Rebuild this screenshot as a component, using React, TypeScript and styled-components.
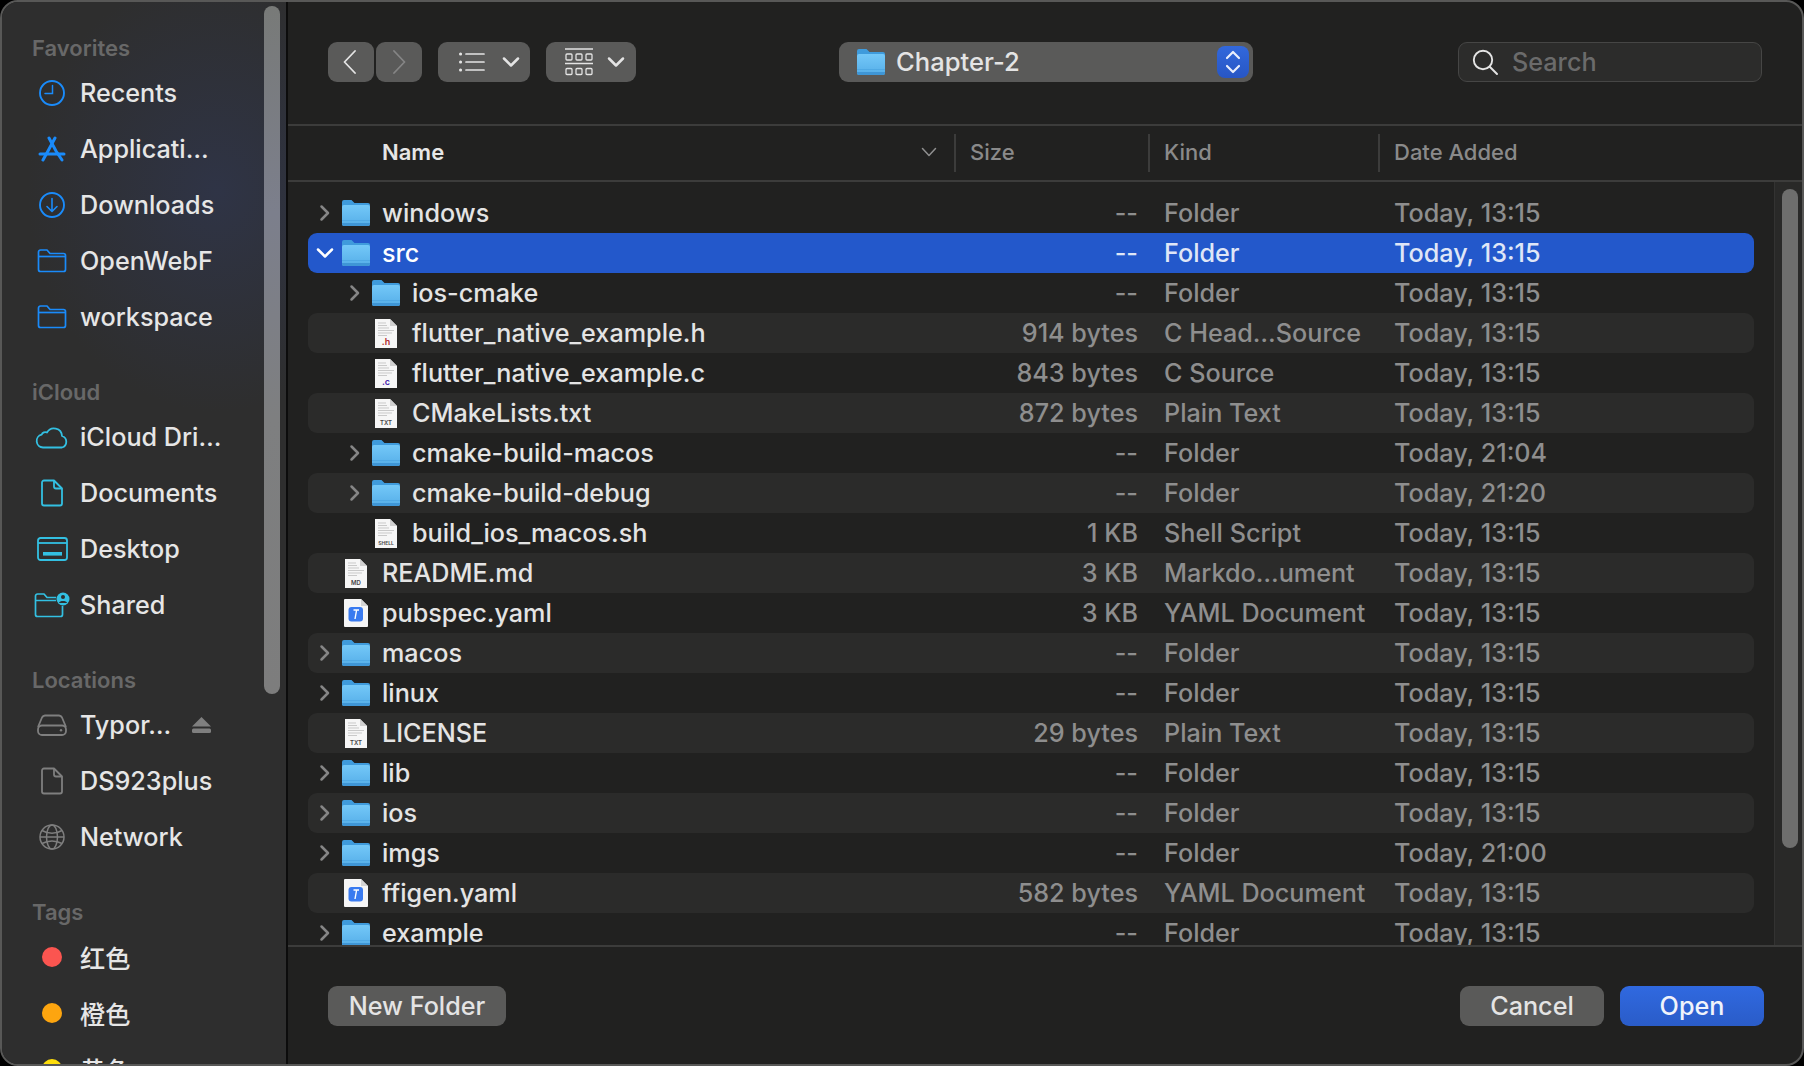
import styled, { createGlobalStyle } from "styled-components";
import type { ReactNode } from "react";

const GlobalStyle = createGlobalStyle`
  html, body {
    margin: 0;
    padding: 0;
    background: #000;
    font-family: Inter, "Noto Sans CJK SC", sans-serif;
  }
`;

const Window = styled.div`
  box-sizing: border-box;
  display: flex;
  width: 1804px;
  height: 1066px;
  overflow: hidden;
  background: #212120;
  border: 2px solid #585857;
  border-radius: 18px;
`;

const Sidebar = styled.aside`
  position: relative;
  flex: 0 0 286px;
  box-sizing: border-box;
  height: 100%;
  padding-top: 29px;
  overflow: hidden;
  background:
    radial-gradient(ellipse 190px 220px at 215px 190px, #2f3446 0%, rgba(47, 52, 70, 0) 100%),
    #2e2e2e;
  border-right: 2px solid #0c0c0c;
`;

const SidebarThumb = styled.div`
  position: absolute;
  top: 4px;
  left: 262px;
  width: 16px;
  height: 688px;
  border-radius: 8px;
  background: linear-gradient(180deg, #787a78 0%, #7c7f8c 30%, #7e7f80 60%, #7d7d7d 100%);
`;

const SectionTitle = styled.div<{ $first?: boolean }>`
  height: 34px;
  margin-top: ${(p) => (p.$first ? 0 : 30)}px;
  padding-left: 30px;
  font-size: 22px;
  font-weight: 600;
  line-height: 35px;
  color: #686868;
`;

const SideItem = styled.div`
  display: flex;
  align-items: center;
  height: 55px;
  padding-bottom: 1px;
  padding-left: 28px;
  font-size: 25.2px;
  font-weight: 450;
  color: #e6e6e6;
`;

const SideIcon = styled.span`
  display: flex;
  flex: 0 0 44px;
  align-items: center;
  justify-content: center;
  margin-right: 6px;
`;

const SideLabel = styled.span`
  white-space: nowrap;
`;

const Eject = styled.svg`
  margin-left: auto;
  margin-right: 75px;
`;

const TagDot = styled.span<{ $color: string }>`
  width: 20px;
  height: 20px;
  border-radius: 50%;
  background: ${(p) => p.$color};
`;

const Main = styled.main`
  display: flex;
  flex: 1;
  flex-direction: column;
  min-width: 0;
`;

const Toolbar = styled.div`
  display: flex;
  flex: 0 0 auto;
  box-sizing: border-box;
  align-items: flex-start;
  height: 124px;
  padding: 40px 40px 0;
  border-bottom: 2px solid #3c3c3b;
`;

const NavButton = styled.div<{ $gap: number; $nudge: number }>`
  display: flex;
  flex: 0 0 auto;
  box-sizing: border-box;
  align-items: center;
  justify-content: center;
  width: 46px;
  height: 40px;
  margin-right: ${(p) => p.$gap}px;
  padding-right: ${(p) => p.$nudge}px;
  border-radius: 9px;
  background: #5a5a59;
`;

const ViewButton = styled.div<{ $width: number; $lead: number; $inner: number }>`
  display: flex;
  flex: 0 0 auto;
  box-sizing: border-box;
  align-items: center;
  width: ${(p) => p.$width}px;
  height: 40px;
  margin-right: 16px;
  padding-left: ${(p) => p.$lead}px;
  gap: ${(p) => p.$inner}px;
  border-radius: 9px;
  background: #5a5a59;
`;

const PathControl = styled.div`
  display: flex;
  flex: 0 0 auto;
  box-sizing: border-box;
  align-items: center;
  width: 414px;
  height: 40px;
  margin-left: 187px;
  padding: 0 4px 0 18px;
  border-radius: 9px;
  background: #5a5a59;
  font-size: 25.6px;
  font-weight: 450;
  color: #e4e4e4;
`;

const PathLabel = styled.span`
  margin-left: 11px;
  margin-top: -2px;
`;

const Stepper = styled.div`
  display: flex;
  align-items: center;
  justify-content: center;
  width: 32px;
  height: 32px;
  margin-left: auto;
  border-radius: 8px;
  background: linear-gradient(180deg, #3268dc, #2756c4);
`;

const SearchField = styled.div`
  display: flex;
  box-sizing: border-box;
  align-items: center;
  width: 304px;
  height: 40px;
  margin-left: auto;
  padding-left: 13px;
  border: 1px solid #464645;
  border-radius: 9px;
  background: #2c2c2b;
  font-size: 25.2px;
  font-weight: 450;
  color: #6b6b6b;
`;

const SearchText = styled.span`
  margin-left: 14px;
`;

const TableHeader = styled.div`
  display: grid;
  flex: 0 0 auto;
  grid-template-columns: 666px 194px 230px 1fr;
  box-sizing: border-box;
  align-items: center;
  height: 56px;
  border-bottom: 2px solid #3c3c3b;
`;

const HeaderCell = styled.div<{ $lead?: boolean }>`
  display: flex;
  box-sizing: border-box;
  align-items: center;
  height: 38px;
  padding-bottom: 2px;
  padding-left: ${(p) => (p.$lead ? 94 : 14)}px;
  border-left: ${(p) => (p.$lead ? "none" : "2px solid #3c3c3b")};
  font-size: 22px;
  font-weight: ${(p) => (p.$lead ? 600 : 450)};
  color: ${(p) => (p.$lead ? "#e6e6e6" : "#8a8a8a")};
`;

const SortChevron = styled.svg`
  margin-left: auto;
  margin-right: 17px;
`;

const Body = styled.div`
  display: flex;
  flex: 1;
  min-height: 0;
`;

const List = styled.div`
  flex: 1;
  min-width: 0;
  padding: 11px 20px 0;
  overflow: hidden;
`;

const Row = styled.div<{ $alt: boolean; $selected?: boolean }>`
  display: grid;
  grid-template-columns: 657px 173px 256px 1fr;
  align-items: center;
  height: 40px;
  border-radius: 9px;
  background: ${(p) => (p.$selected ? "#2358cb" : p.$alt ? "#2b2b2a" : "transparent")};
  font-size: 25.2px;
  font-weight: 450;
  white-space: nowrap;
`;

const NameCell = styled.div<{ $depth: number; $selected?: boolean }>`
  display: flex;
  align-items: center;
  padding-left: ${(p) => p.$depth * 30}px;
  color: ${(p) => (p.$selected ? "#fff" : "#e4e4e4")};
`;

const Disclosure = styled.span`
  display: flex;
  flex: 0 0 34px;
  align-items: center;
  justify-content: center;
`;

const FileIcon = styled.span`
  display: flex;
  flex: 0 0 28px;
  align-items: center;
  justify-content: center;
  margin-right: 12px;
`;

const SizeCell = styled.div<{ $selected?: boolean }>`
  text-align: right;
  color: ${(p) => (p.$selected ? "#dfe6f7" : "#8e8e8e")};
`;

const InfoCell = styled.div<{ $indent?: number; $selected?: boolean }>`
  padding-left: ${(p) => p.$indent ?? 0}px;
  color: ${(p) => (p.$selected ? "#dfe6f7" : "#8e8e8e")};
`;

const ScrollTrack = styled.div`
  flex: 0 0 28px;
  box-sizing: border-box;
  padding: 7px 4px 0 7px;
  border-left: 1px solid #333332;
  background: #292928;
`;

const ScrollThumb = styled.div`
  width: 16px;
  height: 659px;
  border-radius: 8px;
  background: #6e6e6d;
`;

const Footer = styled.div`
  display: flex;
  flex: 0 0 auto;
  box-sizing: border-box;
  height: 119px;
  padding: 39px 38px 0 40px;
  border-top: 2px solid #3c3c3b;
`;

const FooterButton = styled.div<{ $width: number; $primary?: boolean }>`
  display: flex;
  box-sizing: border-box;
  align-items: center;
  justify-content: center;
  width: ${(p) => p.$width}px;
  height: 40px;
  padding-bottom: 1px;
  border-radius: 9px;
  background: ${(p) => (p.$primary ? "linear-gradient(180deg, #3069e0, #2a5cc8)" : "#5a5a59")};
  font-size: 25.2px;
  font-weight: 450;
  color: ${(p) => (p.$primary ? "#f0f3fb" : "#e4e4e4")};
`;

const FooterRight = styled.div`
  display: flex;
  gap: 16px;
  margin-left: auto;
`;

const BLUE = "#1a8bfa";
const CYAN = "#33c0e2";
const GRAY = "#7f7f7f";

const ClockIcon = () => (
  <svg width="28" height="28" viewBox="0 0 28 28" fill="none" stroke={BLUE} strokeWidth="1.9" strokeLinecap="round">
    <circle cx="14" cy="14" r="12" />
    <path d="M14.5 6.5V14.5H7" strokeWidth="1.5" />
  </svg>
);

const AppsIcon = () => (
  <svg width="28" height="26" viewBox="0 0 28 26" fill="none" stroke={BLUE} strokeWidth="3" strokeLinecap="round">
    <path d="M11 2L18 15L24 24" />
    <path d="M17 2L10 15L5 24" />
    <path d="M2 18H26" />
  </svg>
);

const DownloadIcon = () => (
  <svg width="28" height="28" viewBox="0 0 28 28" fill="none" stroke={BLUE} strokeWidth="1.9" strokeLinecap="round" strokeLinejoin="round">
    <circle cx="14" cy="14" r="12" />
    <path d="M14 7.5V20M9 15.5L14 20.5L19 15.5" strokeWidth="1.6" />
  </svg>
);

const SideFolderIcon = () => (
  <svg width="30" height="24" viewBox="0 0 30 24" fill="none" stroke={BLUE} strokeWidth="1.7" strokeLinejoin="round">
    <path d="M1.5 6.5V3A2 2 0 0 1 3.5 1H10L13 4.5H26.5A2 2 0 0 1 28.5 6.5V20.5A2 2 0 0 1 26.5 22.5H3.5A2 2 0 0 1 1.5 20.5Z" />
    <path d="M1.5 7.5H28.5" />
  </svg>
);

const CloudIcon = () => (
  <svg width="34" height="24" viewBox="0 0 34 24" fill="none" stroke={CYAN} strokeWidth="1.8" strokeLinejoin="round">
    <path d="M8 22.5A6.5 6.5 0 0 1 6.6 9.7A4 4 0 0 1 12 7.5A8 8 0 0 1 27 11A6 6 0 0 1 27 22.5Z" />
  </svg>
);

const DocumentIcon = ({ color }: { color: string }) => (
  <svg width="24" height="28" viewBox="0 0 24 28" fill="none" stroke={color} strokeWidth="1.8" strokeLinejoin="round">
    <path d="M14 1.5H4A2 2 0 0 0 2 3.5V24.5A2 2 0 0 0 4 26.5H20A2 2 0 0 0 22 24.5V9.5Z" />
    <path d="M14 1.5V7.5A2 2 0 0 0 16 9.5H22" />
  </svg>
);

const DesktopIcon = () => (
  <svg width="31" height="24" viewBox="0 0 31 24" fill="none" stroke={CYAN} strokeWidth="1.8">
    <rect x="1" y="1" width="29" height="22" rx="2.5" />
    <path d="M1 6H30" />
    <rect x="6" y="15" width="19" height="3.6" fill={CYAN} stroke="none" />
  </svg>
);

const SharedIcon = () => (
  <svg width="36" height="26" viewBox="0 0 36 26" fill="none">
    <path
      d="M1.5 8V4A2 2 0 0 1 3.5 2H10L13 5.5H22M1.5 8.5H22M1.5 8V22.5A2 2 0 0 0 3.5 24.5H26.5A2 2 0 0 0 28.5 22.5V14"
      stroke={CYAN}
      strokeWidth="1.7"
      strokeLinejoin="round"
    />
    <circle cx="29" cy="7" r="6.5" fill={CYAN} />
    <circle cx="29" cy="5" r="2" fill="#2e2e2e" />
    <path d="M25 11C25.5 8.4 32.5 8.4 33 11Z" fill="#2e2e2e" />
  </svg>
);

const DriveIcon = () => (
  <svg width="30" height="22" viewBox="0 0 30 22" fill="none" stroke={GRAY} strokeWidth="1.8">
    <path d="M1 13L5 3.5A3.5 3.5 0 0 1 8 1.5H22A3.5 3.5 0 0 1 25 3.5L29 13" />
    <rect x="1" y="11.5" width="28" height="9.5" rx="4" />
    <circle cx="24" cy="16.2" r="1.2" fill={GRAY} stroke="none" />
  </svg>
);

const GlobeIcon = () => (
  <svg width="28" height="28" viewBox="0 0 28 28" fill="none" stroke={GRAY} strokeWidth="1.5">
    <circle cx="14" cy="14" r="12" />
    <path d="M4 7.5C10 11 18 11 24 7.5M4 20.5C10 17 18 17 24 20.5M2 14H26" />
    <ellipse cx="14" cy="14" rx="5.5" ry="12" />
  </svg>
);

const Chevron = ({ color, open }: { color: string; open?: boolean }) => (
  <svg width="18" height="18" viewBox="0 0 18 18" fill="none" stroke={color} strokeWidth="2.5" strokeLinecap="round" strokeLinejoin="round">
    {open ? <path d="M2 5.5L9 12.5L16 5.5" /> : <path d="M5.5 2.5L12 9L5.5 15.5" />}
  </svg>
);

const FolderIcon = ({ id }: { id: string }) => (
  <svg width="28" height="26" viewBox="0 0 28 26" style={{ display: "block" }}>
    <defs>
      <linearGradient id={id} x1="0" y1="0" x2="0" y2="1">
        <stop offset="0" stopColor="#74c8f8" />
        <stop offset="1" stopColor="#55aee8" />
      </linearGradient>
    </defs>
    <path d="M0 2A2 2 0 0 1 2 0H9.5L12.5 3H26A2 2 0 0 1 28 5V12H0Z" fill="#3f9bdc" />
    <path d="M0 7A2 2 0 0 1 2 5H26A2 2 0 0 1 28 7V24A2 2 0 0 1 26 26H2A2 2 0 0 1 0 24Z" fill={`url(#${id})`} />
    <rect x="0" y="20" width="28" height="1" fill="#3f9bdc" opacity="0.45" />
    <path d="M0 23H28V24A2 2 0 0 1 26 26H2A2 2 0 0 1 0 24Z" fill="#3f96d6" />
  </svg>
);

const DocLines = () => (
  <path d="M3 4H11M3 6.5H12M3 9H14M3 11.5H19M3 14H17M3 16.5H12" stroke="#c9c9c9" strokeWidth="1" />
);

const PlainFile = ({ label, color, size }: { label: string; color: string; size: number }) => (
  <svg width="22" height="29" viewBox="0 0 22 29" style={{ display: "block" }}>
    <path d="M0 0H15L22 7V29H0Z" fill="#f6f6f6" />
    <path d="M15 0L22 7H15Z" fill="#d0d0d0" />
    <DocLines />
    <text x="11" y="26" textAnchor="middle" fontFamily="Inter, sans-serif" fontSize={size} fontWeight="600" fill={color}>
      {label}
    </text>
  </svg>
);

const YamlFile = () => (
  <svg width="24" height="28" viewBox="0 0 24 28" style={{ display: "block" }}>
    <path d="M1 0H17L24 7V27A1 1 0 0 1 23 28H1A1 1 0 0 1 0 27V1A1 1 0 0 1 1 0Z" fill="#f6f6f6" />
    <path d="M17 0L24 7H17Z" fill="#d4d4d4" />
    <rect x="4.5" y="8" width="14.5" height="14.5" rx="3" fill="#3a7bf0" />
    <path d="M9.5 11H15M12.6 11L11 20" stroke="#fff" strokeWidth="1.4" fill="none" />
  </svg>
);

type Entry = {
  name: string;
  size: string;
  kind: string;
  date: string;
  depth?: number;
  icon?: ReactNode;
  open?: boolean;
  selected?: boolean;
};

const folder = (name: string, date = "Today, 13:15", depth = 0): Entry => ({
  name,
  size: "--",
  kind: "Folder",
  date,
  depth,
});

const today = "Today, 13:15";

const entries: Entry[] = [
  folder("windows"),
  { ...folder("src"), open: true, selected: true },
  folder("ios-cmake", today, 1),
  { name: "flutter_native_example.h", size: "914 bytes", kind: "C Head…Source", date: today, depth: 1, icon: <PlainFile label=".h" color="#b02a2a" size={9} /> },
  { name: "flutter_native_example.c", size: "843 bytes", kind: "C Source", date: today, depth: 1, icon: <PlainFile label=".c" color="#4a2ab0" size={9} /> },
  { name: "CMakeLists.txt", size: "872 bytes", kind: "Plain Text", date: today, depth: 1, icon: <PlainFile label="TXT" color="#444" size={6} /> },
  folder("cmake-build-macos", "Today, 21:04", 1),
  folder("cmake-build-debug", "Today, 21:20", 1),
  { name: "build_ios_macos.sh", size: "1 KB", kind: "Shell Script", date: today, depth: 1, icon: <PlainFile label="SHELL" color="#444" size={5} /> },
  { name: "README.md", size: "3 KB", kind: "Markdo…ument", date: today, icon: <PlainFile label="MD" color="#444" size={6} /> },
  { name: "pubspec.yaml", size: "3 KB", kind: "YAML Document", date: today, icon: <YamlFile /> },
  folder("macos"),
  folder("linux"),
  { name: "LICENSE", size: "29 bytes", kind: "Plain Text", date: today, icon: <PlainFile label="TXT" color="#444" size={6} /> },
  folder("lib"),
  folder("ios"),
  folder("imgs", "Today, 21:00"),
  { name: "ffigen.yaml", size: "582 bytes", kind: "YAML Document", date: today, icon: <YamlFile /> },
  folder("example"),
];

export default function App() {
  return (
    <>
      <GlobalStyle />
      <Window>
        <Sidebar>
          <SidebarThumb />
          <SectionTitle $first>Favorites</SectionTitle>
          <SideItem><SideIcon><ClockIcon /></SideIcon><SideLabel>Recents</SideLabel></SideItem>
          <SideItem><SideIcon><AppsIcon /></SideIcon><SideLabel>Applicati…</SideLabel></SideItem>
          <SideItem><SideIcon><DownloadIcon /></SideIcon><SideLabel>Downloads</SideLabel></SideItem>
          <SideItem><SideIcon><SideFolderIcon /></SideIcon><SideLabel>OpenWebF</SideLabel></SideItem>
          <SideItem><SideIcon><SideFolderIcon /></SideIcon><SideLabel>workspace</SideLabel></SideItem>

          <SectionTitle>iCloud</SectionTitle>
          <SideItem><SideIcon><CloudIcon /></SideIcon><SideLabel>iCloud Dri…</SideLabel></SideItem>
          <SideItem><SideIcon><DocumentIcon color={CYAN} /></SideIcon><SideLabel>Documents</SideLabel></SideItem>
          <SideItem><SideIcon><DesktopIcon /></SideIcon><SideLabel>Desktop</SideLabel></SideItem>
          <SideItem><SideIcon><SharedIcon /></SideIcon><SideLabel>Shared</SideLabel></SideItem>

          <SectionTitle>Locations</SectionTitle>
          <SideItem>
            <SideIcon><DriveIcon /></SideIcon>
            <SideLabel>Typor…</SideLabel>
            <Eject width="19" height="16" viewBox="0 0 19 16" fill={GRAY}>
              <path d="M9.5 0L19 9.5H0Z" />
              <rect y="11.5" width="19" height="4.5" rx="1.5" />
            </Eject>
          </SideItem>
          <SideItem><SideIcon><DocumentIcon color={GRAY} /></SideIcon><SideLabel>DS923plus</SideLabel></SideItem>
          <SideItem><SideIcon><GlobeIcon /></SideIcon><SideLabel>Network</SideLabel></SideItem>

          <SectionTitle>Tags</SectionTitle>
          <SideItem><SideIcon><TagDot $color="#fb5550" /></SideIcon><SideLabel>红色</SideLabel></SideItem>
          <SideItem><SideIcon><TagDot $color="#fda50f" /></SideIcon><SideLabel>橙色</SideLabel></SideItem>
          <SideItem><SideIcon><TagDot $color="#fedd0b" /></SideIcon><SideLabel>黄色</SideLabel></SideItem>
        </Sidebar>

        <Main>
          <Toolbar>
            <NavButton $gap={2} $nudge={2}>
              <svg width="14" height="24" viewBox="0 0 14 24" fill="none" stroke="#e4e4e4" strokeWidth="1.8" strokeLinecap="round" strokeLinejoin="round">
                <path d="M12 1L1.5 12L12 23" />
              </svg>
            </NavButton>
            <NavButton $gap={16} $nudge={0}>
              <svg width="14" height="24" viewBox="0 0 14 24" fill="none" stroke="#858585" strokeWidth="1.8" strokeLinecap="round" strokeLinejoin="round">
                <path d="M2 1L12.5 12L2 23" />
              </svg>
            </NavButton>
            <ViewButton $width={92} $lead={21} $inner={17}>
              <svg width="26" height="20" viewBox="0 0 26 20" fill="none" stroke="#e4e4e4" strokeWidth="1.7" strokeLinecap="round">
                <path d="M7 2H25M7 10H25M7 18H25" />
                <path d="M1.5 2H1.6M1.5 10H1.6M1.5 18H1.6" strokeWidth="3" />
              </svg>
              <Chevron color="#e4e4e4" open />
            </ViewButton>
            <ViewButton $width={90} $lead={19} $inner={14}>
              <svg width="28" height="28" viewBox="0 0 28 28" fill="none" stroke="#e4e4e4" strokeWidth="1.3">
                <path d="M0 1H28M0 15.5H28" strokeWidth="1.7" />
                <rect x="1" y="6" width="6" height="6" rx="1" />
                <rect x="11" y="6" width="6" height="6" rx="1" />
                <rect x="21" y="6" width="6" height="6" rx="1" />
                <rect x="1" y="20.5" width="6" height="6" rx="1" />
                <rect x="11" y="20.5" width="6" height="6" rx="1" />
                <rect x="21" y="20.5" width="6" height="6" rx="1" />
              </svg>
              <Chevron color="#e4e4e4" open />
            </ViewButton>

            <PathControl>
              <FolderIcon id="path-folder" />
              <PathLabel>Chapter-2</PathLabel>
              <Stepper>
                <svg width="18" height="26" viewBox="0 0 18 26" fill="none" stroke="#e8eefc" strokeWidth="2.2" strokeLinecap="round" strokeLinejoin="round">
                  <path d="M3 9L9 3L15 9M3 17L9 23L15 17" />
                </svg>
              </Stepper>
            </PathControl>

            <SearchField>
              <svg width="26" height="26" viewBox="0 0 26 26" fill="none" stroke="#e4e4e4" strokeWidth="1.9" strokeLinecap="round">
                <circle cx="11" cy="11" r="9.2" />
                <path d="M18 18L25 25" />
              </svg>
              <SearchText>Search</SearchText>
            </SearchField>
          </Toolbar>

          <TableHeader>
            <HeaderCell $lead>
              Name
              <SortChevron width="16" height="10" viewBox="0 0 16 10" fill="none" stroke="#8f8f8f" strokeWidth="1.5" strokeLinecap="round" strokeLinejoin="round">
                <path d="M1.5 1.5L8 8.5L14.5 1.5" />
              </SortChevron>
            </HeaderCell>
            <HeaderCell>Size</HeaderCell>
            <HeaderCell>Kind</HeaderCell>
            <HeaderCell>Date Added</HeaderCell>
          </TableHeader>

          <Body>
            <List>
              {entries.map((entry, i) => (
                <Row key={entry.name} $alt={i % 2 === 1} $selected={entry.selected}>
                  <NameCell $depth={entry.depth ?? 0} $selected={entry.selected}>
                    <Disclosure>
                      {!entry.icon && <Chevron color={entry.open ? "#fff" : "#868686"} open={entry.open} />}
                    </Disclosure>
                    <FileIcon>{entry.icon ?? <FolderIcon id={`folder-${i}`} />}</FileIcon>
                    {entry.name}
                  </NameCell>
                  <SizeCell $selected={entry.selected}>{entry.size}</SizeCell>
                  <InfoCell $indent={26} $selected={entry.selected}>{entry.kind}</InfoCell>
                  <InfoCell $selected={entry.selected}>{entry.date}</InfoCell>
                </Row>
              ))}
            </List>
            <ScrollTrack>
              <ScrollThumb />
            </ScrollTrack>
          </Body>

          <Footer>
            <FooterButton $width={178}>New Folder</FooterButton>
            <FooterRight>
              <FooterButton $width={144}>Cancel</FooterButton>
              <FooterButton $width={144} $primary>Open</FooterButton>
            </FooterRight>
          </Footer>
        </Main>
      </Window>
    </>
  );
}
